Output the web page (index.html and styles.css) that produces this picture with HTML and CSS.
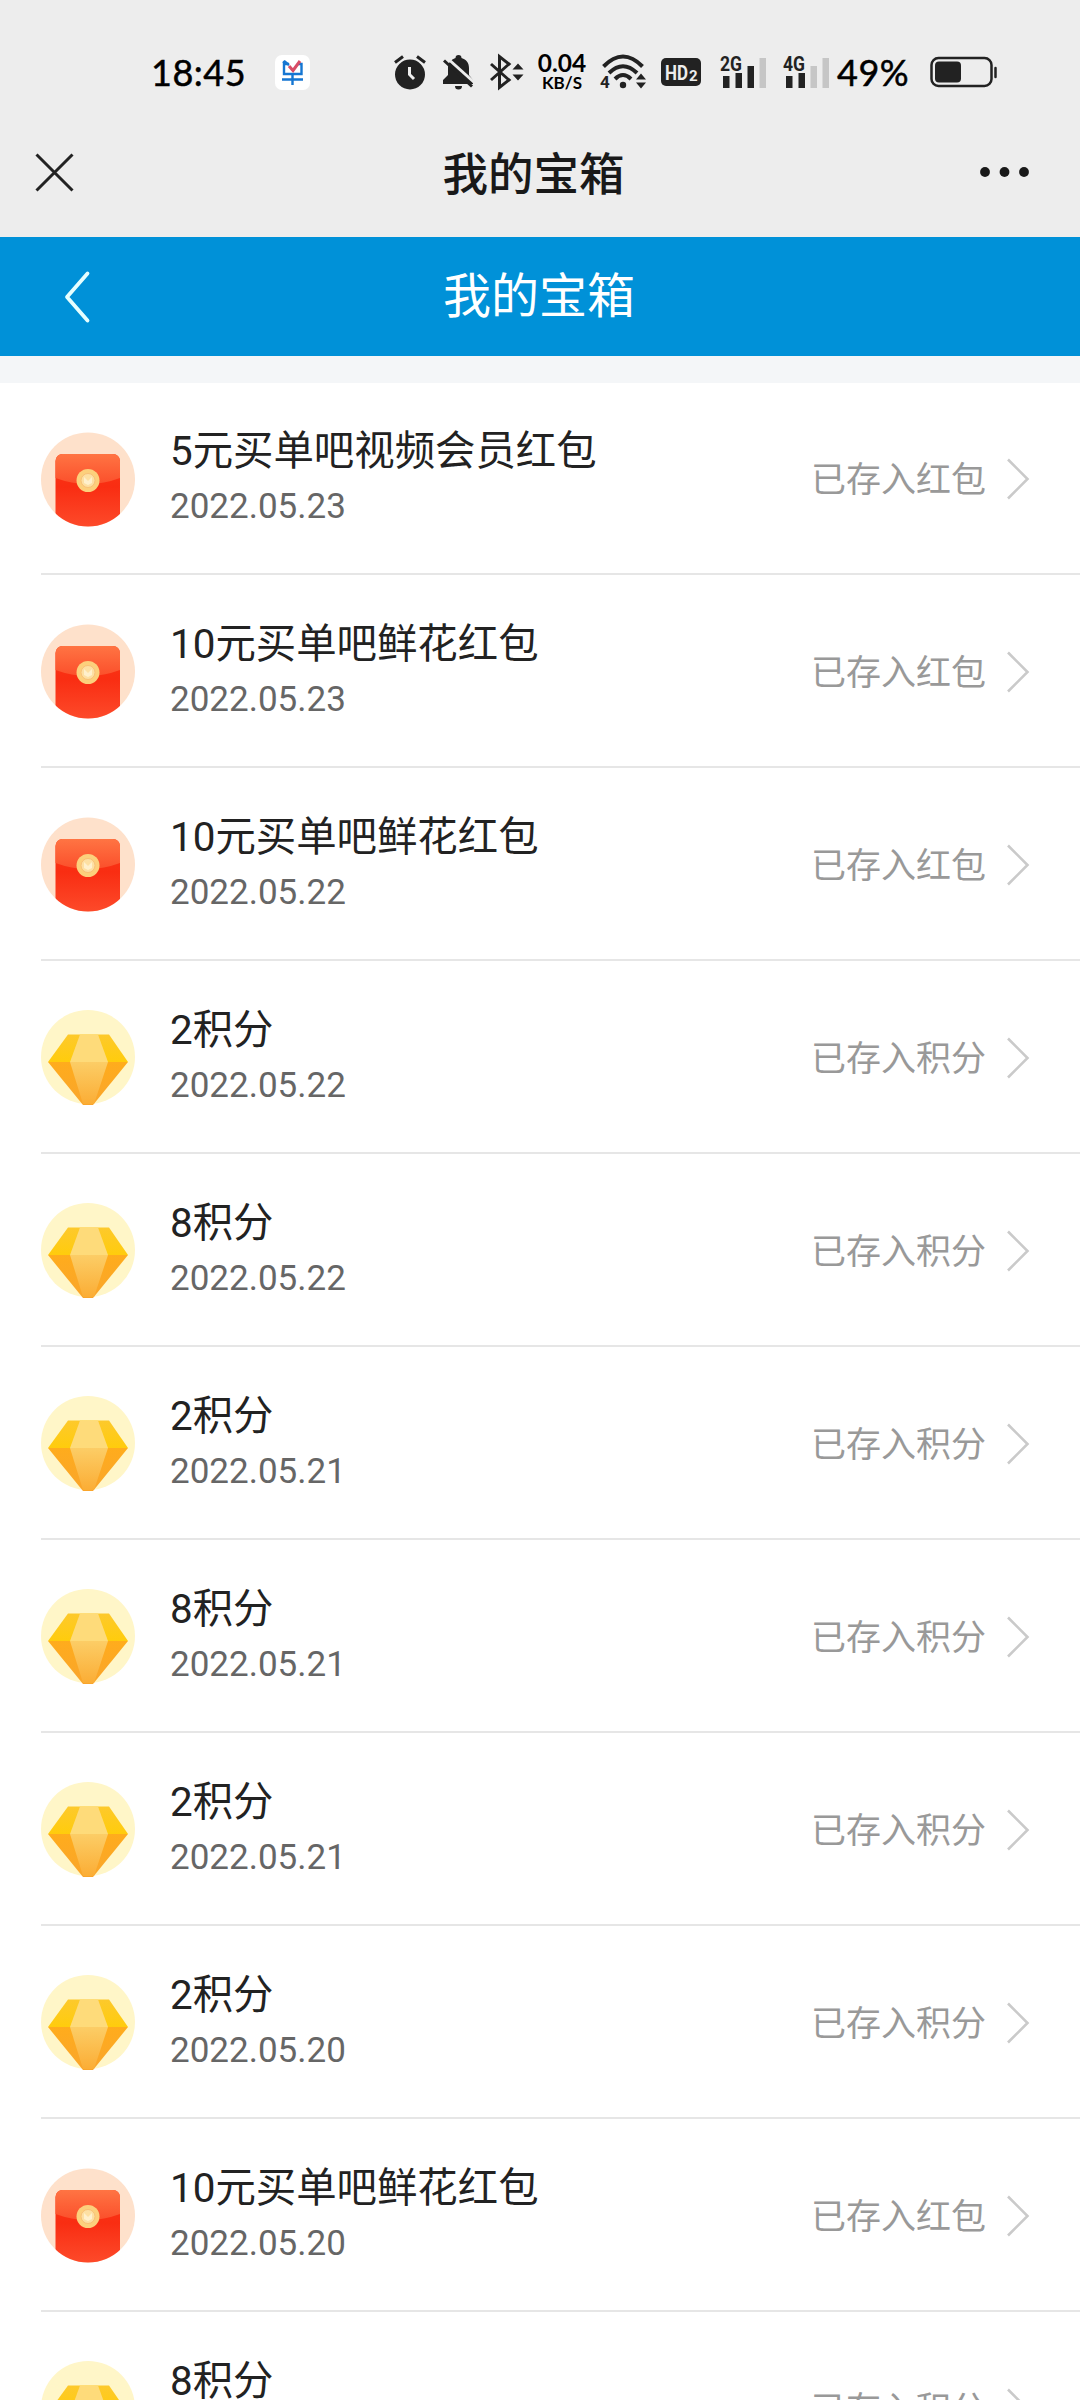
FILE: index.html
```html
<!DOCTYPE html>
<html lang="zh-CN">
<head>
    <meta charset="UTF-8">
    <meta name="viewport" content="width=device-width, initial-scale=1.0">
    <title>我的宝箱</title>
    <link rel="stylesheet" href="styles.css">
</head>
<body>
    <!-- shared icons -->
    <svg class="sprite" width="0" height="0">
        <defs>
            <linearGradient id="bodyRed" x1="0" y1="0" x2="0" y2="1">
                <stop offset="0" stop-color="#fa3a16"/>
                <stop offset="0.45" stop-color="#f92d12"/>
                <stop offset="1" stop-color="#fd4a2a"/>
            </linearGradient>
            <linearGradient id="flapRed" x1="0" y1="0" x2="0" y2="1">
                <stop offset="0" stop-color="#ff7443"/>
                <stop offset="1" stop-color="#fb4f2b"/>
            </linearGradient>
            <linearGradient id="gemTop" x1="0" y1="0" x2="0" y2="1">
                <stop offset="0" stop-color="#fdc92c"/>
                <stop offset="1" stop-color="#ffcc0c"/>
            </linearGradient>
            <linearGradient id="gemLow" x1="0" y1="0" x2="0" y2="1">
                <stop offset="0" stop-color="#ffac1c"/>
                <stop offset="1" stop-color="#f9a52c"/>
            </linearGradient>
            <linearGradient id="gemMid" x1="0" y1="0" x2="0" y2="1">
                <stop offset="0" stop-color="#fccd66"/>
                <stop offset="1" stop-color="#fbad35"/>
            </linearGradient>
            <clipPath id="round"><circle cx="47" cy="47.5" r="47"/></clipPath>
        </defs>
        <symbol id="packet" viewBox="0 0 94 95">
            <circle cx="47" cy="47.5" r="47" fill="#fee1cb"/>
            <g clip-path="url(#round)">
                <path d="M14.500 29a7 7 0 0 1 7-7h50.500a7 7 0 0 1 7 7v66H14.500z" fill="url(#bodyRed)"/>
                <path d="M14.500 46V29a7 7 0 0 1 7-7h50.500a7 7 0 0 1 7 7v17Q47 58 14.500 46z" fill="url(#flapRed)"/>
            </g>
            <circle cx="47" cy="48.500" r="11.500" fill="#fcd07c"/>
            <circle cx="47" cy="48.500" r="7" fill="#fde0a3" stroke="#f9c077" stroke-width="1"/>
            <path d="M43 45l4 4 4-4v6l-4 2-4-2z" fill="#fff0cc"/>
        </symbol>
        <symbol id="gem" viewBox="0 0 94 95">
            <circle cx="47" cy="47" r="47" fill="#fff6c8"/>
            <path d="M27 24.500h41l19 27.500H7z" fill="url(#gemTop)"/>
            <path d="M7 52h80L52 95H42z" fill="url(#gemLow)"/>
            <path d="M39 24.500h18L67 52H29z" fill="#fedb7a"/>
            <path d="M29 52h38L53 94H42z" fill="url(#gemMid)"/>
        </symbol>
        <symbol id="arrow" viewBox="0 0 24 42">
            <path d="M2 1.500L21.500 21 2 40.500" fill="none" stroke="#cacaca" stroke-width="2.600"/>
        </symbol>
    </svg>

    <header class="system">
        <div class="status-bar">
            <span class="time">18:45</span>
            <svg class="app" width="35" height="35" viewBox="0 0 35 35">
                <rect width="35" height="35" rx="7" fill="#fff"/>
                <path d="M14 9H9v10h17.500V9H23M8 8l2-2M7 24.500h21M17.500 19v11" fill="none" stroke="#1576d2" stroke-width="2.400"/>
                <path d="M9 6l5 4" stroke="#1576d2" stroke-width="2.400"/>
                <path d="M14 11l4 4.500L25 6" fill="none" stroke="#d84c66" stroke-width="3"/>
            </svg>
            <svg class="alarm" width="32" height="35" viewBox="0 0 32 35">
                <circle cx="16" cy="19.500" r="15" fill="#222"/>
                <path d="M1 7.500L9 1.500M31 7.500L23 1.500" stroke="#222" stroke-width="3"/>
                <path d="M15.500 12v7.500l4.500 4.500" fill="none" stroke="#eee" stroke-width="3"/>
            </svg>
            <svg class="bell" width="31" height="35" viewBox="0 0 31 35">
                <path d="M15.500 0a3 3 0 0 1 3 3c5 1.500 7.500 5 7.500 10v7l4 5v4H0v-4l5-5v-7c0-5 3-8.500 7.500-10a3 3 0 0 1 3-3zM12 31h7a3.500 3.500 0 0 1-7 0z" fill="#222"/>
                <path d="M3 2l30 27" stroke="#ededed" stroke-width="3"/>
                <path d="M1 5.500l28 26" stroke="#222" stroke-width="3"/>
            </svg>
            <svg class="bluetooth" width="34" height="34" viewBox="0 0 34 34">
                <path d="M1 9l18 16-9.500 7.500V1.500L19 9 1 25" fill="none" stroke="#222" stroke-width="3"/>
                <path d="M22.500 14.500l5.500-6 5.500 6zM22.500 19.500l5.500 6 5.500-6z" fill="#222"/>
            </svg>
            <span class="speed"><b>0.04</b><small>KB/S</small></span>
            <svg class="wifi" width="48" height="36" viewBox="0 0 48 36">
                <g fill="none" stroke="#222" stroke-width="4">
                    <path d="M3.500 12.500Q23 -7.500 42.500 12.500"/>
                    <path d="M9 19Q23 5.500 37 19"/>
                    <path d="M15 25Q23 17 31 25"/>
                </g>
                <circle cx="23" cy="31" r="3.200" fill="#222"/>
                <path d="M36 25.500l5-6 5 6zM36 28.500l5 6 5-6z" fill="#222"/>
                <text x="0" y="33.500" class="tiny">4</text>
            </svg>
            <svg class="hd" width="41" height="29" viewBox="0 0 41 29">
                <rect width="40" height="28" rx="5" fill="#222"/>
                <text x="4" y="22" class="hd-text" textLength="23" lengthAdjust="spacingAndGlyphs">HD</text>
                <text x="28" y="22.500" class="hd-num">2</text>
            </svg>
            <svg class="signal" width="47" height="34" viewBox="0 0 47 34">
                <text x="0" y="15.500" class="net" textLength="22" lengthAdjust="spacingAndGlyphs">2G</text>
                <path d="M3 21h6.500v12H3zM15.500 18H22v15h-6.500zM27.500 11H34v22h-6.500z" fill="#222"/>
                <path d="M39.500 3H46v30h-6.500z" fill="#c6c6c6"/>
            </svg>
            <svg class="signal second" width="47" height="34" viewBox="0 0 47 34">
                <text x="0" y="15.500" class="net" textLength="22" lengthAdjust="spacingAndGlyphs">4G</text>
                <path d="M3 21h6.500v12H3zM15.500 18H22v15h-6.500z" fill="#222"/>
                <path d="M27.500 11H34v22h-6.500zM39.500 3H46v30h-6.500z" fill="#c6c6c6"/>
            </svg>
            <span class="percent">49%</span>
            <svg class="battery" width="68" height="32" viewBox="0 0 68 32">
                <rect x="1.500" y="2" width="60" height="28" rx="7" fill="none" stroke="#222" stroke-width="2.500"/>
                <rect x="5" y="5.500" width="26" height="21" rx="4" fill="#222"/>
                <path d="M65.500 12v9" stroke="#222" stroke-width="2.500" stroke-linecap="round"/>
            </svg>
        </div>
        <div class="nav-bar">
            <svg class="close" width="39" height="39" viewBox="0 0 39 39">
                <path d="M1.500 1.500l36 36M37.500 1.500l-36 36" stroke="#222" stroke-width="3"/>
            </svg>
            <h1>我的宝箱</h1>
            <svg class="more" width="50" height="10" viewBox="0 0 50 10">
                <circle cx="5" cy="5" r="4.900"/>
                <circle cx="24.500" cy="5" r="4.900"/>
                <circle cx="44" cy="5" r="4.900"/>
            </svg>
        </div>
    </header>

    <div class="page-head">
        <svg class="back" width="26" height="52" viewBox="0 0 26 52">
            <path d="M23.500 2.500L3 26l20.500 23.500" fill="none" stroke="#e6ffff" stroke-width="3.800" stroke-linecap="round" stroke-linejoin="round"/>
        </svg>
        <h2>我的宝箱</h2>
    </div>

    <ul class="list">
        <li class="item">
            <svg class="icon"><use href="#packet"/></svg>
            <div class="row">
                <div class="info"><p class="name">5元买单吧视频会员红包</p><p class="date">2022.05.23</p></div>
                <span class="state">已存入红包</span>
                <svg class="arrow"><use href="#arrow"/></svg>
            </div>
        </li>
        <li class="item">
            <svg class="icon"><use href="#packet"/></svg>
            <div class="row">
                <div class="info"><p class="name">10元买单吧鲜花红包</p><p class="date">2022.05.23</p></div>
                <span class="state">已存入红包</span>
                <svg class="arrow"><use href="#arrow"/></svg>
            </div>
        </li>
        <li class="item">
            <svg class="icon"><use href="#packet"/></svg>
            <div class="row">
                <div class="info"><p class="name">10元买单吧鲜花红包</p><p class="date">2022.05.22</p></div>
                <span class="state">已存入红包</span>
                <svg class="arrow"><use href="#arrow"/></svg>
            </div>
        </li>
        <li class="item">
            <svg class="icon"><use href="#gem"/></svg>
            <div class="row">
                <div class="info"><p class="name">2积分</p><p class="date">2022.05.22</p></div>
                <span class="state">已存入积分</span>
                <svg class="arrow"><use href="#arrow"/></svg>
            </div>
        </li>
        <li class="item">
            <svg class="icon"><use href="#gem"/></svg>
            <div class="row">
                <div class="info"><p class="name">8积分</p><p class="date">2022.05.22</p></div>
                <span class="state">已存入积分</span>
                <svg class="arrow"><use href="#arrow"/></svg>
            </div>
        </li>
        <li class="item">
            <svg class="icon"><use href="#gem"/></svg>
            <div class="row">
                <div class="info"><p class="name">2积分</p><p class="date">2022.05.21</p></div>
                <span class="state">已存入积分</span>
                <svg class="arrow"><use href="#arrow"/></svg>
            </div>
        </li>
        <li class="item">
            <svg class="icon"><use href="#gem"/></svg>
            <div class="row">
                <div class="info"><p class="name">8积分</p><p class="date">2022.05.21</p></div>
                <span class="state">已存入积分</span>
                <svg class="arrow"><use href="#arrow"/></svg>
            </div>
        </li>
        <li class="item">
            <svg class="icon"><use href="#gem"/></svg>
            <div class="row">
                <div class="info"><p class="name">2积分</p><p class="date">2022.05.21</p></div>
                <span class="state">已存入积分</span>
                <svg class="arrow"><use href="#arrow"/></svg>
            </div>
        </li>
        <li class="item">
            <svg class="icon"><use href="#gem"/></svg>
            <div class="row">
                <div class="info"><p class="name">2积分</p><p class="date">2022.05.20</p></div>
                <span class="state">已存入积分</span>
                <svg class="arrow"><use href="#arrow"/></svg>
            </div>
        </li>
        <li class="item">
            <svg class="icon"><use href="#packet"/></svg>
            <div class="row">
                <div class="info"><p class="name">10元买单吧鲜花红包</p><p class="date">2022.05.20</p></div>
                <span class="state">已存入红包</span>
                <svg class="arrow"><use href="#arrow"/></svg>
            </div>
        </li>
        <li class="item">
            <svg class="icon"><use href="#gem"/></svg>
            <div class="row">
                <div class="info"><p class="name">8积分</p><p class="date">2022.05.20</p></div>
                <span class="state">已存入积分</span>
                <svg class="arrow"><use href="#arrow"/></svg>
            </div>
        </li>
    </ul>
</body>
</html>
```
FILE: styles.css
```css
* {
    box-sizing: border-box;
    margin: 0;
    padding: 0;
}

body {
    width: 1080px;
    height: 2400px;
    overflow: hidden;
    display: flex;
    flex-direction: column;
    background-color: #fff;
    font-family: Roboto, "Noto Sans CJK SC", sans-serif;
}

svg {
    display: block;
    flex: none;
    overflow: visible;
}

.sprite {
    height: 0;
}

/* phone status bar */
.system {
    flex: none;
    height: 237px;
    background-color: #ededed;
}

.status-bar {
    display: flex;
    align-items: center;
    height: 107px;
    padding: 37px 0 0 151px;
    color: #000;
}

.time,
.percent {
    flex: none;
    font-family: Lato, sans-serif;
    font-size: 36px;
    line-height: 40px;
    white-space: nowrap;
    -webkit-text-stroke: 0.5px #000;
}

.time {
    width: 124px;
    letter-spacing: 0.5px;
}

.alarm {
    margin-left: 84px;
}

.bell {
    margin-left: 17px;
}

.bluetooth {
    margin-left: 16px;
}

.speed {
    flex: none;
    display: flex;
    flex-direction: column;
    align-items: center;
    width: 52px;
    margin-left: 12px;
    font-family: Lato, sans-serif;
}

.speed b {
    font-size: 24.500px;
    line-height: 20px;
    font-weight: 700;
}

.speed small {
    font-size: 17px;
    line-height: 19px;
    font-weight: 700;
}

.wifi {
    margin-left: 12px;
}

.hd {
    margin-left: 13px;
}

.signal {
    margin-left: 18px;
}

.signal.second {
    margin-left: 16px;
}

.percent {
    width: 74px;
    margin-left: 7px;
    letter-spacing: 0.5px;
}

.battery {
    margin-left: 19px;
}

.tiny {
    font: bold 17px Roboto, sans-serif;
    fill: #222;
}

.hd-text {
    font: bold 21px Roboto, sans-serif;
    fill: #ededed;
}

.hd-num {
    font: bold 15px Roboto, sans-serif;
    fill: #ededed;
}

.net {
    font: bold 21px Roboto, sans-serif;
    fill: #222;
}

/* webview title */
.nav-bar {
    display: flex;
    align-items: center;
    justify-content: space-between;
    height: 130px;
    padding: 0 50px 0 35px;
}

.nav-bar h1 {
    margin: 8px 0 0 13px;
    font-size: 45.500px;
    font-weight: 500;
    line-height: 60px;
    color: #191919;
}

.more {
    fill: #191919;
}

/* page title */
.page-head {
    flex: none;
    display: flex;
    align-items: center;
    height: 119px;
    padding-left: 64px;
    background-color: #0091d8;
}

.page-head h2 {
    margin-left: 353px;
    font-size: 48px;
    font-weight: 400;
    line-height: 60px;
    color: #fff;
}

.list {
    flex: 1;
    list-style: none;
    border-top: 27px solid #f4f6f8;
}

.item {
    display: flex;
    align-items: center;
    height: 193px;
    margin-left: 41px;
    padding-top: 2px;
    border-bottom: 2px solid #e6e6e6;
}

.item:first-child {
    height: 192px;
}

.icon {
    width: 94px;
    height: 95px;
}

.row {
    flex: 1;
    display: flex;
    align-items: center;
    padding-right: 50px;
}

.info {
    flex: 1;
    margin-left: 35px;
}

.name {
    font-size: 40.400px;
    line-height: 56px;
    color: #222;
}

.date {
    font-size: 35px;
    line-height: 54px;
    color: #666;
}

.state {
    padding-top: 4px;
    font-size: 35px;
    line-height: 50px;
    color: #999;
}

.arrow {
    width: 24px;
    height: 42px;
    margin-left: 20px;
}
```
